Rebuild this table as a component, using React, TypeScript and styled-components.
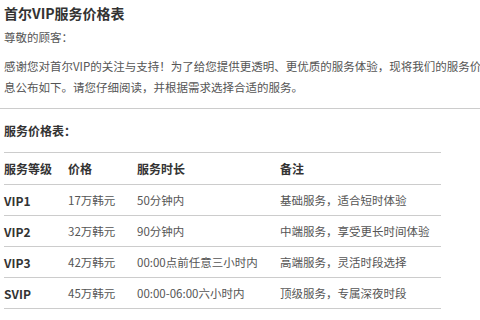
import React, { FC } from 'react';
import styled, { createGlobalStyle } from 'styled-components';

const GlobalStyle = createGlobalStyle`
  html, body {
    margin: 0;
    padding: 0;
    overflow: hidden;
    background: #fff;
  }
  body {
    font-family: "Noto Sans CJK SC", "Noto Sans", sans-serif;
  }
`;

const Page = styled.div`
  width: 507px;
  padding: 4px 4px 0 4px;
  color: #555;
  font-size: 11.5px;
`;

const Title = styled.h1`
  margin: 0;
  font-size: 14px;
  line-height: 18px;
  font-weight: bold;
  color: #333;
`;

const Para = styled.p`
  margin: 0;
  line-height: 21px;
`;

const Greeting = styled(Para)`
  margin-top: 5px;
`;

const Intro = styled(Para)`
  margin-top: 8px;
`;

const Rule = styled.hr`
  margin: 10px 0 0 -4px;
  width: 520px;
  border: none;
  border-top: 1px solid #ccc;
`;

const SectionTitle = styled.h2`
  margin: 13px 0 0 0;
  font-size: 12px;
  line-height: 18px;
  font-weight: bold;
  color: #333;
`;

const Table = styled.table`
  margin-top: 12px;
  width: 437px;
  border-collapse: collapse;
  font-size: 11.5px;
  table-layout: fixed;
`;

const Th = styled.th<{ $w: number }>`
  width: ${(p) => p.$w}px;
  text-align: left;
  font-weight: bold;
  font-size: 12px;
  color: #333;
  height: 31px;
  padding: 0;
  border-top: 1px solid #ccc;
  border-bottom: 1px solid #ccc;
`;

const Td = styled.td<{ $strong?: boolean }>`
  padding: 0;
  height: 30px;
  border-bottom: 1px solid #ccc;
  font-weight: ${(p) => (p.$strong ? 'bold' : 'normal')};
  font-size: ${(p) => (p.$strong ? '12px' : '11.5px')};
  color: ${(p) => (p.$strong ? '#333' : '#555')};
`;

const rows = [
  ['VIP1', '17万韩元', '50分钟内', '基础服务，适合短时体验'],
  ['VIP2', '32万韩元', '90分钟内', '中端服务，享受更长时间体验'],
  ['VIP3', '42万韩元', '00:00点前任意三小时内', '高端服务，灵活时段选择'],
  ['SVIP', '45万韩元', '00:00-06:00六小时内', '顶级服务，专属深夜时段'],
];

const App: FC = () => {
  return (
    <Page>
      <GlobalStyle />
      <Title>首尔VIP服务价格表</Title>
      <Greeting>尊敬的顾客：</Greeting>
      <Intro>
        感谢您对首尔VIP的关注与支持！为了给您提供更透明、更优质的服务体验，现将我们的服务价格信息公布如下。请您仔细阅读，并根据需求选择合适的服务。
      </Intro>
      <Rule />
      <SectionTitle>服务价格表：</SectionTitle>
      <Table>
        <thead>
          <tr>
            <Th $w={64}>服务等级</Th>
            <Th $w={69}>价格</Th>
            <Th $w={143}>服务时长</Th>
            <Th $w={161}>备注</Th>
          </tr>
        </thead>
        <tbody>
          {rows.map((r) => (
            <tr key={r[0]}>
              <Td $strong>{r[0]}</Td>
              <Td>{r[1]}</Td>
              <Td>{r[2]}</Td>
              <Td>{r[3]}</Td>
            </tr>
          ))}
        </tbody>
      </Table>
    </Page>
  );
};

export default App;
